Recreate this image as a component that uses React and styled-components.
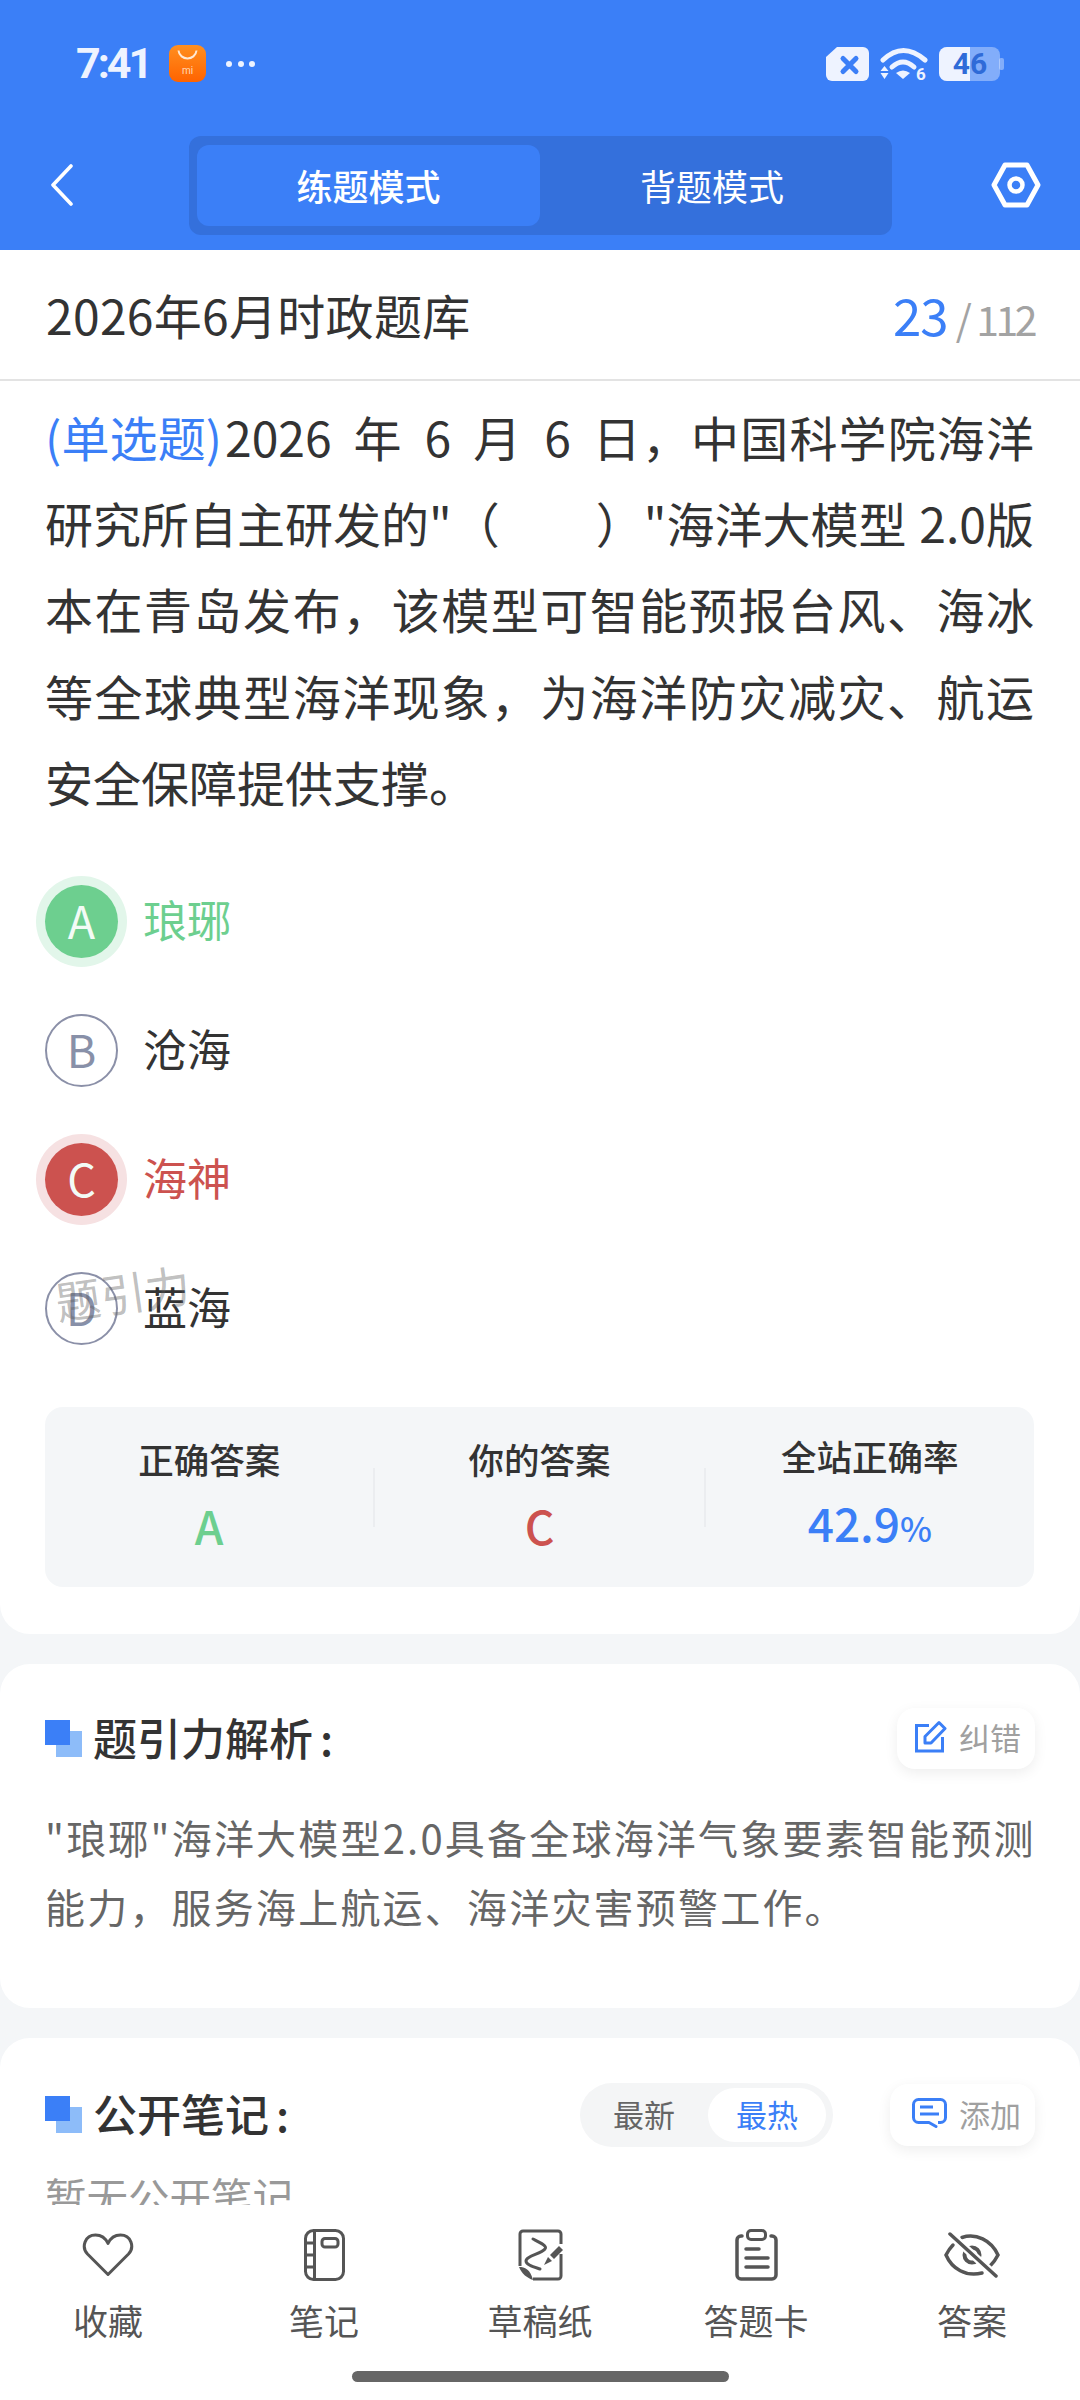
import styled, { createGlobalStyle } from "styled-components";

const BLUE = "#3b7ff7";
const GREEN = "#6dcf8f";
const RED = "#cc524f";

const GlobalStyle = createGlobalStyle`
  html, body {
    margin: 0;
    padding: 0;
    background: #f4f6f8;
  }
  * {
    box-sizing: border-box;
  }
`;

const Page = styled.div`
  width: 1080px;
  height: 2400px;
  display: flex;
  flex-direction: column;
  overflow: hidden;
  background: #f4f6f8;
  color: #333;
  font-family: "Noto Sans CJK SC", "Noto Sans", sans-serif;
`;

const Header = styled.header`
  height: 250px;
  flex: none;
  background: ${BLUE};
`;

const StatusBar = styled.div`
  height: 136px;
  padding: 45px 76px 0 76px;
  display: flex;
  justify-content: space-between;
  align-items: flex-start;
`;

const StatusGroup = styled.div`
  display: flex;
  align-items: center;
  gap: 11px;
  height: 37px;
`;

const Clock = styled.span`
  font-family: Roboto, sans-serif;
  font-weight: 700;
  font-size: 43px;
  line-height: 37px;
  letter-spacing: -3px;
  color: #eef3ff;
  margin-right: 8px;
`;

const Dots = styled.div`
  display: flex;
  gap: 5.5px;
  margin-left: 9px;
`;

const Dot = styled.i`
  width: 6px;
  height: 6px;
  border-radius: 50%;
  background: #eef3ff;
`;

const NavBar = styled.nav`
  display: grid;
  grid-template-columns: 189px 703px 1fr;
  align-items: center;
  height: 99px;
`;

const BackButton = styled.div`
  padding: 0 0 2px 50px;
  display: flex;
`;

const GearButton = styled.div`
  padding: 0 39px 2px 0;
  display: flex;
  justify-content: flex-end;
`;

const ModeSwitch = styled.div`
  height: 99px;
  padding: 9px 8px;
  display: flex;
  border-radius: 12px;
  background: #3470dc;
`;

const ModeTab = styled.div`
  width: ${(props) => (props.$active ? "343px" : "auto")};
  flex: ${(props) => (props.$active ? "none" : 1)};
  display: flex;
  align-items: center;
  justify-content: center;
  padding-bottom: 2px;
  border-radius: 12px;
  background: ${(props) => (props.$active ? BLUE : "transparent")};
  color: #fff;
  font-size: 36px;
  font-weight: ${(props) => (props.$active ? 500 : 400)};
`;

const TitleRow = styled.div`
  height: 131px;
  flex: none;
  padding: 0 46px;
  display: flex;
  align-items: center;
  justify-content: space-between;
  background: #fff;
  border-bottom: 2px solid #e3e3e3;
`;

const ExamTitle = styled.h1`
  margin: 0;
  padding-bottom: 2px;
  font-size: 48px;
  font-weight: 400;
  letter-spacing: 0.3px;
  color: #333;
`;

const Counter = styled.div`
  display: flex;
  align-items: baseline;
  padding-bottom: 2px;
  color: #a3a3a3;
  font-size: 41px;
  letter-spacing: -3.5px;
`;

const CounterNow = styled.span`
  font-size: 51px;
  letter-spacing: -1px;
  color: ${BLUE};
  margin-right: 8px;
`;

const CounterSlash = styled.span`
  margin-right: 8px;
`;

const Main = styled.main`
  flex: 1;
  min-height: 0;
  overflow: hidden;
`;

const Card = styled.section`
  background: #fff;
  border-radius: ${(props) => (props.$first ? "0 0 30px 30px" : "30px")};
  margin-top: ${(props) => (props.$first ? 0 : "30px")};
  padding: ${(props) => props.$padding};
`;

const Question = styled.div`
  font-size: 48px;
  line-height: 86.2px;
  color: #333;
`;

const QuestionLine = styled.div`
  text-align: justify;
  text-align-last: ${(props) => (props.$left ? "left" : "justify")};
  word-spacing: ${(props) => props.$wordSpacing || 0}px;
  white-space: nowrap;
`;

const QuestionType = styled.span`
  color: ${BLUE};
  letter-spacing: -1px;
  margin-right: 4px;
`;

const Options = styled.div`
  margin-top: 33px;
`;

const optionColor = (state) =>
  state === "right" ? GREEN : state === "wrong" ? RED : "#333";

const OptionRow = styled.div`
  position: relative;
  height: 129px;
  display: flex;
  align-items: center;
  gap: 25px;
  font-size: 44px;
  color: ${(props) => optionColor(props.$state)};
`;

const OptionText = styled.span`
  padding-bottom: 6px;
`;

const OptionBadge = styled.div`
  width: 73px;
  height: 73px;
  padding-bottom: 5px;
  border-radius: 50%;
  display: flex;
  align-items: center;
  justify-content: center;
  font-size: 45px;
  font-weight: 400;
  color: ${(props) => (props.$state ? "#f3fbf6" : "#8890a8")};
  background: ${(props) => (props.$state ? optionColor(props.$state) : "#fff")};
  border: ${(props) => (props.$state ? "none" : "2px solid #8b90a8")};
  box-shadow: ${(props) =>
    props.$state === "right"
      ? "0 0 0 9px #e2f6ea"
      : props.$state === "wrong"
      ? "0 0 0 9px #f6e1e2"
      : "none"};
`;

const Watermark = styled.div`
  position: absolute;
  left: 10px;
  top: 15px;
  font-size: 45px;
  font-weight: 400;
  color: rgba(90, 90, 90, 0.4);
  transform: rotate(-8deg);
  white-space: nowrap;
`;

const Stats = styled.div`
  margin-top: 34px;
  height: 180px;
  display: flex;
  align-items: center;
  border-radius: 18px;
  background: #f4f6f8;
`;

const StatColumn = styled.div`
  flex: 1;
  padding-bottom: 3px;
  display: flex;
  flex-direction: column;
  align-items: center;
  gap: 13px;
`;

const StatLabel = styled.div`
  font-size: 35.5px;
  line-height: 46px;
  font-weight: 500;
  color: #333;
`;

const StatValue = styled.div`
  font-size: 46px;
  line-height: 60px;
  font-weight: 500;
  color: ${(props) => props.$color};
`;

const StatUnit = styled.span`
  font-size: 34px;
`;

const StatDivider = styled.div`
  width: 2px;
  height: 59px;
  background: #ebedf0;
`;

const SectionHead = styled.div`
  height: ${(props) => props.$height}px;
  display: flex;
  align-items: center;
`;

const SquareMark = styled.div`
  position: relative;
  width: 37px;
  height: 37px;
  flex: none;
  margin-right: 11px;

  &::before {
    content: "";
    position: absolute;
    right: 0;
    bottom: 0;
    width: 26px;
    height: 26px;
    background: #8dbcf9;
  }

  &::after {
    content: "";
    position: absolute;
    left: 0;
    top: 0;
    width: 25px;
    height: 25px;
    background: ${BLUE};
  }
`;

const SectionTitle = styled.h2`
  flex: 1;
  margin: 0;
  padding-bottom: 3px;
  font-size: 44px;
  font-weight: 500;
  color: #333;
`;

const TitleColon = styled.span`
  margin-left: 7px;
`;

const ChipButton = styled.div`
  height: ${(props) => props.$height}px;
  width: ${(props) => props.$width}px;
  display: flex;
  align-items: center;
  justify-content: flex-end;
  gap: 12px;
  padding: 0 14px 3px 0;
  border-radius: 18px;
  background: #fff;
  box-shadow: 0 4px 14px rgba(0, 0, 0, 0.07);
  font-size: 31px;
  color: #a0a0a0;
`;

const Analysis = styled.p`
  margin: 34px 0 0;
  font-size: 40px;
  line-height: 69px;
  letter-spacing: 2.2px;
  white-space: nowrap;
  color: #666;
`;

const SortSwitch = styled.div`
  width: 253px;
  height: 64px;
  margin-right: 57px;
  padding: 5px 7px 5px 0;
  display: flex;
  border-radius: 32px;
  background: #f4f5f6;
`;

const SortOption = styled.div`
  width: ${(props) => (props.$active ? "118px" : "128px")};
  display: flex;
  align-items: center;
  justify-content: center;
  padding-bottom: 3px;
  border-radius: 27px;
  font-size: 31px;
  color: ${(props) => (props.$active ? BLUE : "#666")};
  background: ${(props) => (props.$active ? "#fff" : "transparent")};
`;

const EmptyNotes = styled.div`
  margin-top: 19px;
  font-size: 41.5px;
  line-height: 60px;
  color: #999;
`;

const TabBar = styled.footer`
  height: 195px;
  flex: none;
  background: #fff;
  padding-top: 23px;
`;

const Tabs = styled.div`
  display: grid;
  grid-template-columns: repeat(5, 1fr);
`;

const Tab = styled.div`
  display: flex;
  flex-direction: column;
  align-items: center;
  gap: 16px;
  font-size: 35px;
  line-height: 44px;
  color: #555;
`;

const TabIcon = styled.div`
  height: 54px;
  display: flex;
  align-items: center;
  justify-content: center;
`;

const HomeIndicator = styled.div`
  width: 377px;
  height: 11px;
  margin: 29px auto 0;
  border-radius: 6px;
  background: #666;
`;

function MiStoreIcon() {
  return (
    <svg width="37" height="37" viewBox="0 0 37 37">
      <defs>
        <linearGradient id="miStore" x1="0" y1="0" x2="0" y2="1">
          <stop offset="0" stopColor="#ff8f1f" />
          <stop offset="1" stopColor="#ff6300" />
        </linearGradient>
      </defs>
      <rect width="37" height="37" rx="9" fill="url(#miStore)" />
      <path d="M9.5 5.5C10.5 16 26.5 16 27.5 5.5" fill="none" stroke="#ffe9d4" strokeWidth="2" />
      <text x="18.5" y="29" textAnchor="middle" fontSize="10" fontFamily="Roboto, sans-serif" fill="#ffd9b8">
        mi
      </text>
    </svg>
  );
}

function SimIcon() {
  return (
    <svg width="43" height="34" viewBox="0 0 43 34">
      <path d="M11 0H37a6 6 0 0 1 6 6V28a6 6 0 0 1-6 6H6a6 6 0 0 1-6-6V10Z" fill="#eef3ff" />
      <path d="M17 11.5L30 24.5M30 11.5L17 24.5" stroke={BLUE} strokeWidth="5" strokeLinecap="round" />
    </svg>
  );
}

function WifiIcon() {
  return (
    <svg width="48" height="36" viewBox="0 0 48 36">
      <path d="M3 14Q23-5 45 14" fill="none" stroke="#eef3ff" strokeWidth="5" strokeLinecap="round" />
      <path d="M12 21Q23 11 34 21" fill="none" stroke="#eef3ff" strokeWidth="5" strokeLinecap="round" />
      <path d="M16 27Q23 22 30 27L23 33Z" fill="#eef3ff" />
      <path d="M0.5 25L4.5 20L8.5 25ZM0.5 27H8.5L4.5 33Z" fill="#eef3ff" />
      <text x="41" y="34" textAnchor="middle" fontSize="17" fontWeight="700" fontFamily="Roboto, sans-serif" fill="#eef3ff">
        6
      </text>
    </svg>
  );
}

function BatteryIcon() {
  return (
    <svg width="65" height="34" viewBox="0 0 65 34">
      <rect x="0" y="0" width="61" height="34" rx="8" fill="#eef3ff" fillOpacity="0.4" />
      <rect x="60" y="11" width="5" height="12" rx="2" fill="#eef3ff" fillOpacity="0.4" />
      <path d="M8 0H31V34H8a8 8 0 0 1-8-8V8a8 8 0 0 1 8-8Z" fill="#eef3ff" />
      <text x="31" y="27" textAnchor="middle" fontSize="30" fontWeight="700" fontFamily="Roboto, sans-serif" fill="#2f6bd8">
        46
      </text>
    </svg>
  );
}

function BackIcon() {
  return (
    <svg width="24" height="42" viewBox="0 0 24 42">
      <path d="M21 2L3 21L21 40" fill="none" stroke="#fff" strokeWidth="3.6" strokeLinecap="round" strokeLinejoin="round" />
    </svg>
  );
}

function GearIcon() {
  return (
    <svg width="50" height="46" viewBox="0 0 50 46">
      <path d="M14 3H36L47 23L36 43H14L3 23Z" fill="none" stroke="#fff" strokeWidth="5" strokeLinejoin="round" />
      <circle cx="25" cy="23" r="6.5" fill="none" stroke="#fff" strokeWidth="4.5" />
    </svg>
  );
}

function EditIcon() {
  return (
    <svg width="32" height="33" viewBox="0 0 32 33">
      <path d="M14 5.5H1.5V31H27.5V17" fill="none" stroke={BLUE} strokeWidth="3" />
      <path d="M10 23V16.5L24 2.5L30 8.5L16 23Z" fill="none" stroke={BLUE} strokeWidth="3" strokeLinejoin="round" />
    </svg>
  );
}

function CommentIcon() {
  return (
    <svg width="35" height="30" viewBox="0 0 35 30">
      <path
        d="M17 24.5H6.5A5 5 0 0 1 1.5 19.500V6.500A5 5 0 0 1 6.500 1.500H28.500A5 5 0 0 1 33.500 6.500V19.500A5 5 0 0 1 28.500 24.500H26"
        fill="none"
        stroke={BLUE}
        strokeWidth="3"
      />
      <path d="M17 24.500L24 28.500" stroke={BLUE} strokeWidth="3" strokeLinecap="round" />
      <path d="M8 9H21M8 16H27" stroke={BLUE} strokeWidth="3" />
    </svg>
  );
}

const tabStroke = { fill: "none", stroke: "#555", strokeWidth: 3 };

function HeartIcon() {
  return (
    <svg width="52" height="44" viewBox="0 0 52 44">
      <path
        {...tabStroke}
        strokeLinejoin="round"
        d="M26 41.500L5.500 21C-1 14 3 2 13.500 2C19.500 2 23.500 5 26 10.500C28.500 5 32.500 2 38.500 2C49 2 53 14 46.500 21Z"
      />
    </svg>
  );
}

function NotebookIcon() {
  return (
    <svg width="41" height="52" viewBox="0 0 41 52">
      <rect {...tabStroke} x="1.500" y="1.500" width="38" height="49" rx="8" />
      <path {...tabStroke} d="M10.500 1.500V50.500M1.500 14H10.500M1.500 26H10.500M1.500 38H10.500" />
      <rect {...tabStroke} x="18" y="9.500" width="16" height="8.500" rx="3" />
    </svg>
  );
}

function DraftIcon() {
  return (
    <svg width="45" height="52" viewBox="0 0 45 52">
      <path {...tabStroke} d="M2 37V5A3 3 0 0 1 5 2H40A3 3 0 0 1 43 5V15M43 25V47A3 3 0 0 1 40 50H15" />
      <path d="M1 38C7 38 12 40 15 51C9 49 4 45 1 38Z" fill="#555" />
      <path {...tabStroke} strokeLinecap="round" d="M15 10C21 13 30 17 27 20C23 25 8 27 8 32C8 36 16 38 22 40" />
      <path d="M32 26L41 17L45 21L36 30Z" fill="#555" />
      <path d="M30 28L34 32L26 36Z" fill="#555" />
    </svg>
  );
}

function CardIcon() {
  return (
    <svg width="43" height="52" viewBox="0 0 43 52">
      <path {...tabStroke} strokeWidth="3.500" strokeLinecap="round" d="M7 7H6A4 4 0 0 0 2 11V46A4 4 0 0 0 6 50H37A4 4 0 0 0 41 46V11A4 4 0 0 0 37 7H36" />
      <rect {...tabStroke} x="12.500" y="1.500" width="18" height="9" rx="3.500" />
      <path {...tabStroke} strokeWidth="3.500" strokeLinecap="round" d="M11 20H24M11 29H33M11 38H33" />
    </svg>
  );
}

function EyeOffIcon() {
  return (
    <svg width="56" height="46" viewBox="0 0 56 46">
      <path {...tabStroke} strokeWidth="3.500" strokeLinecap="round" d="M18 5.500C32 1 47 8 54 23C52 27 49 31 46 34M9 13C6 16 4 19 2 23C8 37 22 45 38 41" />
      <circle cx="28" cy="23" r="7.500" fill="none" stroke="#555" strokeWidth="4" />
      <path d="M6 2L52 44" stroke="#fff" strokeWidth="8" />
      <path d="M6 2L52 44" stroke="#555" strokeWidth="3.500" strokeLinecap="round" />
    </svg>
  );
}

const questionLines = [
  {
    wordSpacing: 10,
    text: (
      <>
        <QuestionType>(单选题)</QuestionType>2026 年 6 月 6 日，中国科学院海洋
      </>
    ),
  },
  { left: true, wordSpacing: 2, text: '研究所自主研发的"（　　）"海洋大模型 2.0版' },
  { text: "本在青岛发布，该模型可智能预报台风、海冰" },
  { text: "等全球典型海洋现象，为海洋防灾减灾、航运" },
  { left: true, text: "安全保障提供支撑。" },
];

const options = [
  { key: "A", text: "琅琊", state: "right" },
  { key: "B", text: "沧海" },
  { key: "C", text: "海神", state: "wrong" },
  { key: "D", text: "蓝海", mark: "题引力" },
];

const tabs = [
  { label: "收藏", icon: <HeartIcon /> },
  { label: "笔记", icon: <NotebookIcon /> },
  { label: "草稿纸", icon: <DraftIcon /> },
  { label: "答题卡", icon: <CardIcon /> },
  { label: "答案", icon: <EyeOffIcon /> },
];

function App() {
  return (
    <Page>
      <GlobalStyle />
      <Header>
        <StatusBar>
          <StatusGroup>
            <Clock>7:41</Clock>
            <MiStoreIcon />
            <Dots>
              <Dot />
              <Dot />
              <Dot />
            </Dots>
          </StatusGroup>
          <StatusGroup>
            <SimIcon />
            <WifiIcon />
            <BatteryIcon />
          </StatusGroup>
        </StatusBar>
        <NavBar>
          <BackButton>
            <BackIcon />
          </BackButton>
          <ModeSwitch>
            <ModeTab $active>练题模式</ModeTab>
            <ModeTab>背题模式</ModeTab>
          </ModeSwitch>
          <GearButton>
            <GearIcon />
          </GearButton>
        </NavBar>
      </Header>

      <TitleRow>
        <ExamTitle>2026年6月时政题库</ExamTitle>
        <Counter>
          <CounterNow>23</CounterNow>
          <CounterSlash>/</CounterSlash>
          112
        </Counter>
      </TitleRow>

      <Main>
        <Card $first $padding="12px 46px 46.5px 45px">
          <Question>
            {questionLines.map((line, i) => (
              <QuestionLine key={i} $left={line.left} $wordSpacing={line.wordSpacing}>
                {line.text}
              </QuestionLine>
            ))}
          </Question>
          <Options>
            {options.map((option) => (
              <OptionRow key={option.key} $state={option.state}>
                <OptionBadge $state={option.state}>{option.key}</OptionBadge>
                <OptionText>{option.text}</OptionText>
                {option.mark && <Watermark>{option.mark}</Watermark>}
              </OptionRow>
            ))}
          </Options>
          <Stats>
            <StatColumn>
              <StatLabel>正确答案</StatLabel>
              <StatValue $color={GREEN}>A</StatValue>
            </StatColumn>
            <StatDivider />
            <StatColumn>
              <StatLabel>你的答案</StatLabel>
              <StatValue $color={RED}>C</StatValue>
            </StatColumn>
            <StatDivider />
            <StatColumn>
              <StatLabel>全站正确率</StatLabel>
              <StatValue $color={BLUE}>
                42.9<StatUnit>%</StatUnit>
              </StatValue>
            </StatColumn>
          </Stats>
        </Card>

        <Card $padding="44px 45px 67px 45px">
          <SectionHead $height={61}>
            <SquareMark />
            <SectionTitle>
              题引力解析<TitleColon>:</TitleColon>
            </SectionTitle>
            <ChipButton $width={138} $height={61}>
              <EditIcon />
              纠错
            </ChipButton>
          </SectionHead>
          <Analysis>
            "琅琊"海洋大模型2.0具备全球海洋气象要素智能预测
            <br />
            能力，服务海上航运、海洋灾害预警工作。
          </Analysis>
        </Card>

        <Card $padding="45px 45px 40px 45px">
          <SectionHead $height={64}>
            <SquareMark />
            <SectionTitle>
              公开笔记<TitleColon>:</TitleColon>
            </SectionTitle>
            <SortSwitch>
              <SortOption>最新</SortOption>
              <SortOption $active>最热</SortOption>
            </SortSwitch>
            <ChipButton $width={145} $height={62}>
              <CommentIcon />
              添加
            </ChipButton>
          </SectionHead>
          <EmptyNotes>暂无公开笔记</EmptyNotes>
        </Card>
      </Main>

      <TabBar>
        <Tabs>
          {tabs.map((tab) => (
            <Tab key={tab.label}>
              <TabIcon>{tab.icon}</TabIcon>
              {tab.label}
            </Tab>
          ))}
        </Tabs>
        <HomeIndicator />
      </TabBar>
    </Page>
  );
}

export default App;
